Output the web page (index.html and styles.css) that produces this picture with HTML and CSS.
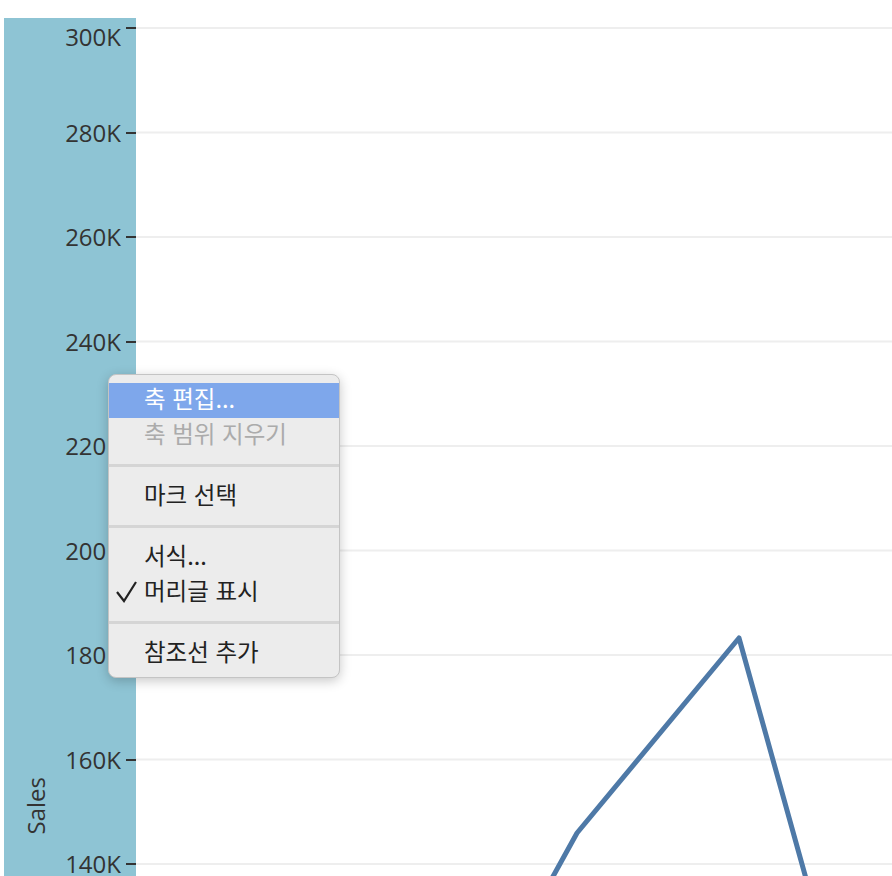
FILE: index.html
```html
<!DOCTYPE html>
<html lang="ko">
<head>
    <meta charset="UTF-8">
    <meta name="viewport" content="width=device-width, initial-scale=1.0">
    <title>Sales</title>
    <link rel="stylesheet" href="styles.css">
</head>
<body>
    <div class="view">
        <div class="axis">
            <ul class="ticks">
                <li class="tick"><span class="val">300K</span><i class="mark"></i></li>
                <li class="tick"><span class="val">280K</span><i class="mark"></i></li>
                <li class="tick"><span class="val">260K</span><i class="mark"></i></li>
                <li class="tick"><span class="val">240K</span><i class="mark"></i></li>
                <li class="tick"><span class="val">220K</span><i class="mark"></i></li>
                <li class="tick"><span class="val">200K</span><i class="mark"></i></li>
                <li class="tick"><span class="val">180K</span><i class="mark"></i></li>
                <li class="tick"><span class="val">160K</span><i class="mark"></i></li>
                <li class="tick"><span class="val">140K</span><i class="mark"></i></li>
            </ul>
            <span class="title">Sales</span>
        </div>
        <div class="plot">
            <svg width="756" height="876" viewBox="0 0 756 876">
                <g class="grid">
                    <line x1="0" x2="756" y1="28" y2="28"/>
                    <line x1="0" x2="756" y1="132.5" y2="132.5"/>
                    <line x1="0" x2="756" y1="237" y2="237"/>
                    <line x1="0" x2="756" y1="341.5" y2="341.5"/>
                    <line x1="0" x2="756" y1="446" y2="446"/>
                    <line x1="0" x2="756" y1="550.5" y2="550.5"/>
                    <line x1="0" x2="756" y1="655" y2="655"/>
                    <line x1="0" x2="756" y1="759.5" y2="759.5"/>
                    <line x1="0" x2="756" y1="864" y2="864"/>
                </g>
                <polyline class="series" points="404,900 441,833 603,638 676,900"/>
            </svg>
        </div>

        <!-- 축 우클릭 메뉴 -->
        <ul class="menu">
            <li class="item on">축 편집...</li>
            <li class="item off">축 범위 지우기</li>
            <li class="sep"></li>
            <li class="item">마크 선택</li>
            <li class="sep"></li>
            <li class="item">서식...</li>
            <li class="item">
                <svg class="check" width="24" height="24" viewBox="0 0 24 24"><polyline points="2,12 9,21 21,2"/></svg>
                머리글 표시
            </li>
            <li class="sep"></li>
            <li class="item">참조선 추가</li>
        </ul>
    </div>
</body>
</html>
```

FILE: styles.css
```css
*{
    margin: 0;
    padding: 0;
    box-sizing: border-box;
}
html, body{
    height: 100%;
    overflow: hidden;
    background: #fff;
}
.view{
    display: flex;
    height: 876px;
    position: relative;
    font-family: "Open Sans", "Liberation Sans", sans-serif;
}
.axis{
    width: 132px;
    margin: 18px 0 0 4px;
    background: #8ec4d4;
    position: relative;
    overflow: hidden;
}
.ticks{
    list-style: none;
    margin-top: -2px;       /* 첫 눈금선 y=28 */
}
.tick{
    height: 104.5px;
    display: flex;
    align-items: flex-start;
    justify-content: flex-end;
}
.tick .val{
    height: 24px;
    line-height: 24px;
    font-size: 24px;
    color: #333;
    margin-right: 5px;
}
.tick:first-child .val{
    transform: translateY(9px);
}
.tick .mark{
    width: 10px;
    height: 2px;
    margin-top: 11px;
    background: #333;
}
.title{
    position: absolute;
    left: 20px;
    bottom: 42px;
    font-size: 24px;
    line-height: 24px;
    color: #333;
    writing-mode: vertical-rl;
    transform: rotate(180deg);
}
.plot{
    flex: 1;
}
.plot svg{
    display: block;
}
.grid line{
    stroke: #eeeeee;
    stroke-width: 2;
}
.series{
    fill: none;
    stroke: #4e79a7;
    stroke-width: 5;
    stroke-linejoin: round;
}
.menu{
    position: absolute;
    left: 108px;
    top: 374px;
    width: 232px;
    padding: 8px 0 6px;
    list-style: none;
    background: #ececec;
    border: 1px solid #c4c4c4;
    border-radius: 8px;
    box-shadow: 0 3px 12px rgba(0,0,0,0.22);
    font-family: "Noto Sans CJK KR", sans-serif;
    font-size: 23.5px;
    color: #222;
}
.menu .item{
    height: 35px;
    line-height: 31px;
    padding-left: 35px;
    position: relative;
    white-space: nowrap;
}
.menu .on{
    background: #7ea7eb;
    color: #fff;
}
.menu .off{
    color: #ababab;
}
.menu .sep{
    height: 3px;
    margin: 11px 0 12px;
    background: #d5d5d5;
}
.check{
    position: absolute;
    left: 6px;
    top: 5px;
}
.check polyline{
    fill: none;
    stroke: #222;
    stroke-width: 2.2;
}
```
